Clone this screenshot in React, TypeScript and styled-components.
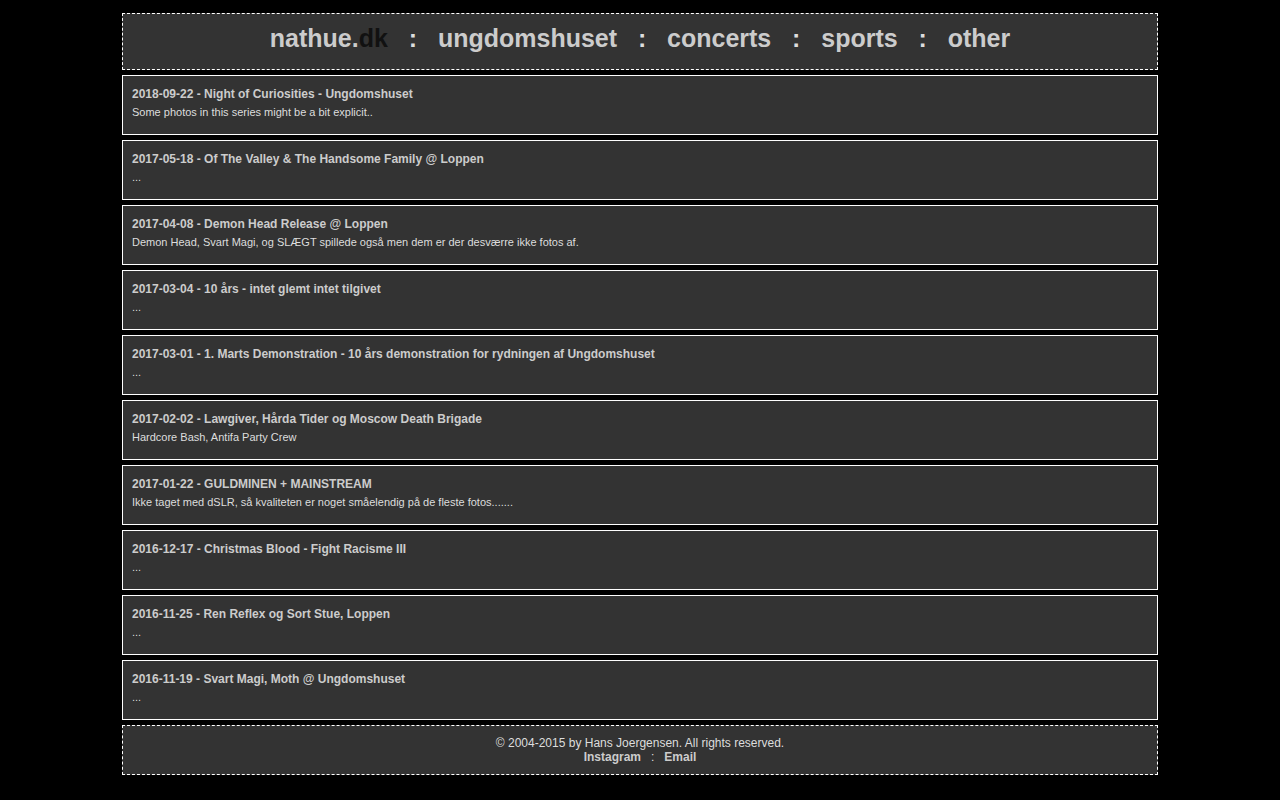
import React from "react";
import styled, { createGlobalStyle } from "styled-components";

const GlobalStyle = createGlobalStyle`
  html, body {
    background: #000;
    margin: 0;
    padding: 0;
  }
  body {
    padding: 8px;
    font-family: "Liberation Sans", Arial, sans-serif;
    color: #ddd;
  }
`;

const Page = styled.div`
  width: 1036px;
  margin: 5px auto 0;
  display: flex;
  flex-direction: column;
  gap: 5px;
`;

const Header = styled.header`
  box-sizing: border-box;
  height: 57px;
  background: #333;
  border: 1px dashed #fff;
  padding: 10px 0 0;
  text-align: center;
  font-size: 25px;
  font-weight: bold;
  line-height: 29px;
  white-space: pre;
  color: #ddd;
`;

const NavLink = styled.a`
  color: #ccc;
  text-decoration: none;
`;

const Dark = styled.span`
  color: #111;
`;

const Sep = styled.span`
  color: #ddd;
`;

const Item = styled.div`
  box-sizing: border-box;
  height: 60px;
  background: #333;
  border: 1px solid #fff;
  padding: 11px 9px 9px;
`;

const Title = styled.a`
  display: block;
  font-size: 12px;
  font-weight: bold;
  line-height: 14px;
  color: #ccc;
  text-decoration: none;
`;

const Desc = styled.div`
  margin-top: 5px;
  font-size: 11px;
  line-height: 13px;
  color: #ddd;
`;

const Footer = styled.footer`
  box-sizing: border-box;
  height: 50px;
  background: #333;
  border: 1px dashed #fff;
  padding: 10px 0;
  text-align: center;
  font-size: 12px;
  line-height: 14px;
  color: #ddd;
  white-space: pre;
`;

const FootLink = styled.a`
  font-weight: bold;
  color: #ccc;
  text-decoration: none;
`;

const items = [
  ["2018-09-22 - Night of Curiosities - Ungdomshuset", "Some photos in this series might be a bit explicit.."],
  ["2017-05-18 - Of The Valley & The Handsome Family @ Loppen", "..."],
  ["2017-04-08 - Demon Head Release @ Loppen", "Demon Head, Svart Magi, og SLÆGT spillede også men dem er der desværre ikke fotos af."],
  ["2017-03-04 - 10 års - intet glemt intet tilgivet", "..."],
  ["2017-03-01 - 1. Marts Demonstration - 10 års demonstration for rydningen af Ungdomshuset", "..."],
  ["2017-02-02 - Lawgiver, Hårda Tider og Moscow Death Brigade", "Hardcore Bash, Antifa Party Crew"],
  ["2017-01-22 - GULDMINEN + MAINSTREAM", "Ikke taget med dSLR, så kvaliteten er noget småelendig på de fleste fotos......."],
  ["2016-12-17 - Christmas Blood - Fight Racisme III", "..."],
  ["2016-11-25 - Ren Reflex og Sort Stue, Loppen", "..."],
  ["2016-11-19 - Svart Magi, Moth @ Ungdomshuset", "..."],
];

export default function App() {
  return (
    <>
      <GlobalStyle />
      <Page>
        <Header>
          <NavLink href="#">
            nathue.<Dark>dk</Dark>
          </NavLink>
          <Sep>{"   :   "}</Sep>
          <NavLink href="#">ungdomshuset</NavLink>
          <Sep>{"   :   "}</Sep>
          <NavLink href="#">concerts</NavLink>
          <Sep>{"   :   "}</Sep>
          <NavLink href="#">sports</NavLink>
          <Sep>{"   :   "}</Sep>
          <NavLink href="#">other</NavLink>
        </Header>
        {items.map(([t, d]) => (
          <Item key={t}>
            <Title href="#">{t}</Title>
            <Desc>{d}</Desc>
          </Item>
        ))}
        <Footer>
          <div>© 2004-2015 by Hans Joergensen. All rights reserved.</div>
          <div>
            <FootLink href="#">Instagram</FootLink>
            {"   :   "}
            <FootLink href="#">Email</FootLink>
          </div>
        </Footer>
      </Page>
    </>
  );
}
